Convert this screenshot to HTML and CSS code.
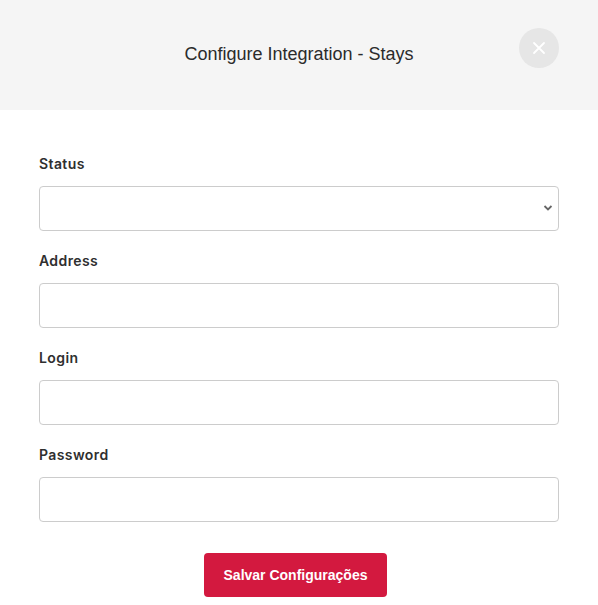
FILE: index.html
```html
<!DOCTYPE html>
<html>
<head>
<meta charset="utf-8">
<link rel="stylesheet" href="styles.css">
</head>
<body>
<div class="modal">
  <header class="modal-header">
    <h1 class="modal-title">Configure Integration - Stays</h1>
    <button class="close-btn" aria-label="Close">
      <svg width="14" height="14" viewBox="0 0 14 14"><path d="M2 2L12 12M12 2L2 12" stroke="#fff" stroke-width="1.8" stroke-linecap="round"/></svg>
    </button>
  </header>
  <form class="modal-body">
    <div class="field">
      <label class="label">Status</label>
      <div class="select-wrap">
        <select class="input select"><option></option></select>
        <svg class="chevron" width="10" height="6" viewBox="0 0 10 6"><path d="M1.5 1L5 4.5L8.5 1" fill="none" stroke="#666" stroke-width="1.8"/></svg>
      </div>
    </div>
    <div class="field">
      <label class="label">Address</label>
      <input class="input" type="text">
    </div>
    <div class="field">
      <label class="label">Login</label>
      <input class="input" type="text">
    </div>
    <div class="field">
      <label class="label">Password</label>
      <input class="input" type="password">
    </div>
    <div class="actions">
      <button type="button" class="save-btn">Salvar Configurações</button>
    </div>
  </form>
</div>
</body>
</html>
```

FILE: styles.css
```css
html, body {
  margin: 0;
  padding: 0;
  background: #fff;
}
.modal {
  width: 598px;
}
.modal-header {
  position: relative;
  height: 110px;
  background: #f5f5f5;
  display: flex;
  align-items: center;
  justify-content: center;
}
.modal-title {
  margin: 0;
  font-family: "Liberation Sans", Arial, sans-serif;
  font-weight: 400;
  font-size: 18px;
  color: #2b2b2b;
  position: relative;
  top: -1px;
}
.close-btn {
  position: absolute;
  left: 519px;
  top: 28px;
  width: 40px;
  height: 40px;
  border-radius: 50%;
  border: none;
  background: #e6e6e6;
  padding: 0;
  display: flex;
  align-items: center;
  justify-content: center;
}
.modal-body {
  padding: 44px 39px 0 39px;
  display: flex;
  flex-direction: column;
  gap: 20px;
}
.field {
  display: flex;
  flex-direction: column;
  gap: 12px;
}
.label {
  font-family: Inter, "Noto Sans", sans-serif;
  font-weight: 600;
  font-size: 14px;
  line-height: 20px;
  letter-spacing: 0.4px;
  color: #2f2f2f;
}
.input {
  box-sizing: border-box;
  width: 520px;
  height: 45px;
  border: 1px solid #cccccc;
  border-radius: 4px;
  background: #fff;
  margin: 0;
  padding: 0 12px;
  font-size: 14px;
}
.select-wrap {
  position: relative;
}
.select {
  appearance: none;
  -webkit-appearance: none;
  display: block;
}
.chevron {
  position: absolute;
  right: 6px;
  top: 19px;
}
.actions {
  display: flex;
  justify-content: center;
  padding-top: 11px;
  padding-right: 7px;
}
.save-btn {
  width: 183px;
  height: 44px;
  border: none;
  border-radius: 4px;
  background: #d3193f;
  color: #fff;
  font-family: "Liberation Sans", Arial, sans-serif;
  font-weight: 700;
  font-size: 14px;
  padding: 0;
}
```
